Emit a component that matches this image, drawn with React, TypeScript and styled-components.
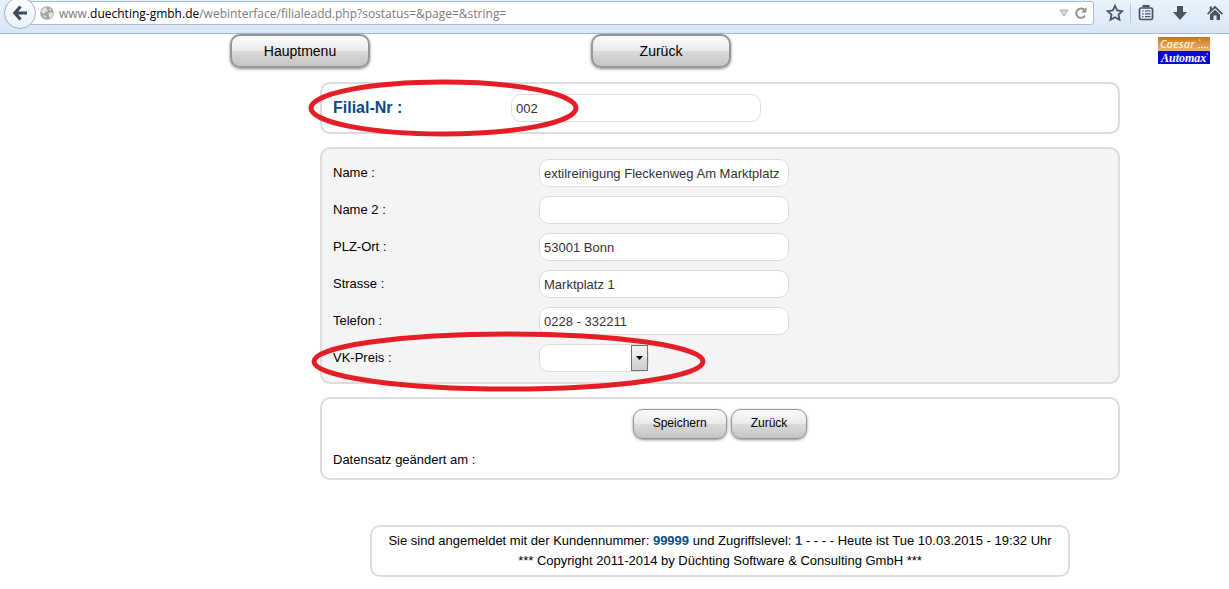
import React from 'react';
import styled, { createGlobalStyle, css } from 'styled-components';

const GlobalStyle = createGlobalStyle`
  * { box-sizing: border-box; }
  body {
    margin: 0;
    background: #fff;
    color: #000;
    font: 13px/20px "Liberation Sans", Arial, sans-serif;
  }
`;

const Toolbar = styled.header`
  display: flex;
  align-items: flex-start;
  height: 34px;
  overflow: hidden;
  background: linear-gradient(#e9f2fb, #d9e7f6);
  border-bottom: 1px solid #a5bad2;
`;

const BackButton = styled.button`
  display: flex;
  align-items: center;
  justify-content: center;
  flex: none;
  z-index: 1;
  width: 32px;
  height: 32px;
  margin: -3px -18px 0 4px;
  padding: 0;
  border: 1px solid #9fb0c3;
  border-radius: 50%;
  background: linear-gradient(#fbfdff, #e9f2fb);
`;

const AddressBar = styled.div`
  display: flex;
  align-items: center;
  flex: 1;
  height: 24px;
  margin-top: 1px;
  padding: 0 5px 0 21px;
  gap: 5px;
  background: #fff;
  border: 1px solid #a9bdd3;
  border-radius: 0 3px 3px 0;
`;

const Address = styled.div`
  flex: 1;
  padding-top: 2px;
  color: #7b7b7b;
  font: 12px/20px "Open Sans", "Noto Sans", sans-serif;
  white-space: nowrap;
  b {
    color: #000;
    font-weight: 400;
  }
`;

const ToolIcons = styled.nav`
  display: flex;
  align-items: center;
  height: 26px;
  padding-left: 5px;
`;

const IconButton = styled.button<{ $width: number; $divided?: boolean }>`
  display: flex;
  align-items: center;
  justify-content: center;
  width: ${(p) => p.$width}px;
  height: 20px;
  padding: 0;
  border: 0;
  border-left: ${(p) => (p.$divided ? '1px solid #b4c6da' : '0')};
  background: none;
`;

const Page = styled.div`
  padding: 0 19px 12px 230px;
`;

const TopNav = styled.nav`
  display: grid;
  grid-template-columns: 361px 1fr auto;
  align-items: start;
  height: 48px;
`;

const GlossButton = styled.button<{ $large?: boolean }>`
  color: #000;
  background: linear-gradient(#fcfcfc 0%, #e9e9e9 48%, #dadada 52%, #c4c4c4 100%);
  border: solid #969696;
  border-radius: 10px;
  font-family: inherit;
  ${(p) =>
    p.$large
      ? css`
          width: 140px;
          height: 34px;
          padding: 0;
          font-size: 14px;
          border-width: 2px;
          box-shadow: 0 1px 3px #888;
        `
      : css`
          height: 30px;
          padding: 0 19px 2px;
          font-size: 12px;
          border-width: 1px;
          box-shadow: 0 1px 3px #888;
        `}
`;

const Logo = styled.svg`
  display: block;
  margin-top: 3px;
`;

const Content = styled.main`
  display: flex;
  flex-direction: column;
  gap: 13px;
  max-width: 800px;
  margin: 0 auto;
`;

const Panel = styled.section<{ $shaded?: boolean }>`
  position: relative;
  display: flex;
  flex-direction: column;
  gap: 9px;
  padding: 10px 11px;
  background: ${(p) => (p.$shaded ? '#f4f4f4' : '#fff')};
  border: 2px solid #dcdcdc;
  border-radius: 10px;
`;

const Row = styled.div<{ $labelWidth: number }>`
  display: grid;
  grid-template-columns: ${(p) => p.$labelWidth}px 1fr;
  align-items: center;
`;

const Label = styled.label<{ $strong?: boolean }>`
  line-height: 28px;
  ${(p) =>
    p.$strong &&
    css`
      color: #0d4a86;
      font-size: 16px;
      font-weight: 700;
    `}
`;

const fieldLook = css`
  height: 28px;
  border: 1px solid #dcdcdc;
  border-radius: 10px;
  background: #fff;
  color: #333;
  font: 13px "Liberation Sans", Arial, sans-serif;
`;

const TextInput = styled.input`
  ${fieldLook}
  width: 250px;
  padding: 0 4px;
`;

const SelectBox = styled.div`
  position: relative;
  width: 110px;
  height: 28px;
`;

const Select = styled.select`
  ${fieldLook}
  appearance: none;
  width: 100%;
  padding: 0 20px 0 4px;
`;

const SelectArrow = styled.span`
  position: absolute;
  top: 1px;
  right: 1px;
  display: flex;
  align-items: center;
  justify-content: center;
  width: 17px;
  height: 26px;
  border: 1px solid #707070;
  background: linear-gradient(#f2f2f2 0%, #ebebeb 49%, #dddddd 51%, #cfcfcf 100%);
  pointer-events: none;
`;

const Marker = styled.svg<{ $left: number; $top: number }>`
  position: absolute;
  left: ${(p) => p.$left}px;
  top: ${(p) => p.$top}px;
  z-index: 2;
  pointer-events: none;
`;

const Actions = styled.div`
  display: flex;
  justify-content: center;
  gap: 4px;
`;

const Changed = styled.p`
  margin: 4px 0 0;
  line-height: 16px;
`;

const Footer = styled.footer`
  max-width: 700px;
  margin: 45px auto 0;
  padding: 4px 10px;
  border: 2px solid #dcdcdc;
  border-radius: 10px;
  text-align: center;
  p {
    margin: 0;
  }
  b {
    color: #0d4a86;
  }
`;

const Ring = ({ width, height, left, top }: { width: number; height: number; left: number; top: number }) => (
  <Marker $left={left} $top={top} width={width} height={height} aria-hidden="true">
    <ellipse
      cx={width / 2}
      cy={height / 2}
      rx={width / 2 - 3}
      ry={height / 2 - 3}
      fill="none"
      stroke="#e31e26"
      strokeWidth="5"
    />
  </Marker>
);

const fields = [
  { id: 'name', label: 'Name :', value: 'extilreinigung Fleckenweg Am Marktplatz' },
  { id: 'name2', label: 'Name 2 :', value: '' },
  { id: 'ort', label: 'PLZ-Ort :', value: '53001 Bonn' },
  { id: 'strasse', label: 'Strasse :', value: 'Marktplatz 1' },
  { id: 'telefon', label: 'Telefon :', value: '0228 - 332211' },
];

export default function App() {
  return (
    <>
      <GlobalStyle />
      <Toolbar>
        <BackButton aria-label="Back">
          <svg width="16" height="16" viewBox="0 0 16 16" fill="none" stroke="#3f4c5b" strokeWidth="3.200">
            <path d="M8.500 1.500 2.800 8l5.700 6.500M3 8h12" />
          </svg>
        </BackButton>
        <AddressBar>
          <svg width="14" height="14" viewBox="0 0 14 14">
            <circle cx="7" cy="7" r="6.800" fill="#a3a3a3" />
            <path d="M1.500 4.500 4 2l3-.8-.5 2L8 4.500 6.500 6 5 6.200 4 8l-2-.8zM8.500 7l2.800-.8 1.700 1.300-.7 2.800-2.300 2-1-1.800zM9.500 2l2 1.500-.8 1.300-1.700-.9zM3.500 9l2.300.9-.3 2.300L4 11z" fill="#e4e4e4" />
          </svg>
          <Address>
            www.<b>duechting-gmbh.de</b>/webinterface/filialeadd.php?sostatus=&amp;page=&amp;string=
          </Address>
          <svg width="10" height="8" viewBox="0 0 10 8">
            <path d="M1 1h8L5 7z" fill="#dedede" stroke="#a9a9a9" />
          </svg>
          <svg width="14" height="14" viewBox="0 0 14 14" fill="none">
            <path d="M10 3.600A4.700 4.700 0 1 0 11 9.500" stroke="#929292" strokeWidth="2" />
            <path d="M12.500 1v5.500H7z" fill="#929292" />
          </svg>
        </AddressBar>
        <ToolIcons>
          <IconButton $width={31} aria-label="Bookmark">
            <svg width="18" height="18" viewBox="0 0 18 18">
              <path d="M9 1.800l2.200 4.700 5 .6-3.700 3.500 1 5.100L9 13.200l-4.500 2.500 1-5.100L1.800 7.100l5-.6z" fill="none" stroke="#49535f" strokeWidth="1.800" />
            </svg>
          </IconButton>
          <IconButton $width={30} $divided aria-label="Bookmarks list">
            <svg width="16" height="16" viewBox="0 0 16 16" fill="none" stroke="#49535f">
              <rect x="1.500" y="3" width="13" height="11.500" rx="1.500" strokeWidth="1.700" />
              <path d="M5.500 2.500V1h5v1.500" strokeWidth="2" />
              <path d="M4 6h1.500M7 6h5.500M4 8.800h1.500M7 8.800h5.500M4 11.600h1.500M7 11.600h5.500" strokeWidth="1.200" />
            </svg>
          </IconButton>
          <IconButton $width={40} aria-label="Downloads">
            <svg width="16" height="16" viewBox="0 0 16 16">
              <path d="M5 1h6v6h4l-7 8-7-8h4z" fill="#49535f" />
            </svg>
          </IconButton>
          <IconButton $width={29} aria-label="Home">
            <svg width="16" height="16" viewBox="0 0 16 16" fill="#49535f">
              <path d="M8 .8 16 8.500l-1.200 1.200L8 3.300 1.200 9.700 0 8.500l2.800-2.700V1.500h2v2.300zM8 4.800l5 4.700V15H9.500v-4.500h-3V15H3V9.500z" />
            </svg>
          </IconButton>
        </ToolIcons>
      </Toolbar>

      <Page>
        <TopNav>
          <div>
            <GlossButton $large>Hauptmenu</GlossButton>
          </div>
          <div>
            <GlossButton $large>Zurück</GlossButton>
          </div>
          <Logo width="52" height="27" viewBox="0 0 52 27" role="img" aria-label="Caesar Automax">
            <defs>
              <linearGradient id="amber" x1="0" y1="0" x2="0" y2="1">
                <stop offset="0" stopColor="#c9751a" />
                <stop offset="1" stopColor="#edb583" />
              </linearGradient>
            </defs>
            <rect width="52" height="14" fill="url(#amber)" />
            <rect y="14" width="52" height="13" fill="#0808dc" />
            <text x="2" y="11" fill="#fff3d0" fontFamily="Open Sans, sans-serif" fontSize="11" fontWeight="600" fontStyle="italic">Caesar</text>
            <text x="3" y="25" fill="#fff" fontFamily="Liberation Serif, serif" fontSize="12" fontWeight="700" fontStyle="italic">Automax</text>
            <path d="M41 3h1.500M48.500 17h1.500M40 10.500h10" stroke="#fff3d0" strokeWidth="1" strokeDasharray="2 1" />
          </Logo>
        </TopNav>

        <Content>
          <Panel>
            <Row $labelWidth={178}>
              <Label $strong htmlFor="filial">Filial-Nr :</Label>
              <TextInput id="filial" defaultValue="002" />
            </Row>
            <Ring left={-14} top={-5} width={271} height={58} />
          </Panel>

          <Panel $shaded>
            {fields.map((f) => (
              <Row key={f.id} $labelWidth={206}>
                <Label htmlFor={f.id}>{f.label}</Label>
                <TextInput id={f.id} defaultValue={f.value} />
              </Row>
            ))}
            <Row $labelWidth={206}>
              <Label htmlFor="vk">VK-Preis :</Label>
              <SelectBox>
                <Select id="vk" defaultValue="">
                  <option value="" />
                </Select>
                <SelectArrow>
                  <svg width="7" height="4" viewBox="0 0 7 4">
                    <path d="M0 0h7L3.500 4z" />
                  </svg>
                </SelectArrow>
              </SelectBox>
            </Row>
            <Ring left={-11} top={182} width={395} height={61} />
          </Panel>

          <Panel>
            <Actions>
              <GlossButton>Speichern</GlossButton>
              <GlossButton>Zurück</GlossButton>
            </Actions>
            <Changed>Datensatz geändert am :</Changed>
          </Panel>
        </Content>

        <Footer>
          <p>
            Sie sind angemeldet mit der Kundennummer: <b>99999</b> und Zugriffslevel: <b>1</b> - - - - Heute ist Tue 10.03.2015 - 19:32 Uhr
          </p>
          <p>*** Copyright 2011-2014 by Düchting Software &amp; Consulting GmbH ***</p>
        </Footer>
      </Page>
    </>
  );
}
